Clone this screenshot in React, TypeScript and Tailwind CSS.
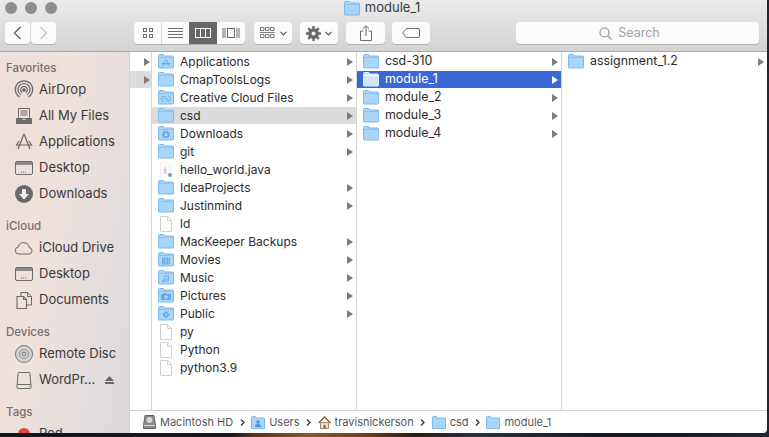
import React from "react";

type Glyph = "none" | "apps" | "cloud" | "down" | "movies" | "music" | "pictures" | "public";

function Folder({ glyph = "none", selected = false }: { glyph?: Glyph; selected?: boolean }) {
  const g = "#69a9e6";
  return (
    <svg width="16" height="15" viewBox="0 0 16 15" className="shrink-0">
      <path d="M.5 13.500V1.500q0-1 1-1h3.600q.7 0 1.100.6l.6.9h7.700q1 0 1 1v10.500q0 .5-.5.500H1q-.5 0-.5-.5Z" fill={selected ? "#cfe6fb" : "#a9d5f9"} stroke={selected ? "#e7f2fd" : "#7dbaee"} strokeWidth="1" />
      <path d="M1 3.500h14" stroke={selected ? "#fff" : "#8cc3f0"} strokeWidth="1" />
      {glyph === "apps" && <path d="M8 5 4.500 12M8 5l3.500 7M5 10h6M3.500 9.500h9" stroke={g} strokeWidth=".9" fill="none" />}
      {glyph === "cloud" && <path d="M5.500 11a2.200 2.200 0 0 1 0-4.400h2.200M10.500 6.600a2.200 2.200 0 0 1 0 4.400H8.300M5.800 8.800h4.400" stroke={g} strokeWidth=".9" fill="none" />}
      {glyph === "down" && (
        <>
          <circle cx="8" cy="8.500" r="3.700" fill={g} />
          <path d="M8 6.300v3.600M6.400 8.500 8 10.200l1.600-1.700" stroke="#d4eafc" strokeWidth="1" fill="none" />
        </>
      )}
      {glyph === "movies" && <path d="M4.500 6h7v6h-7ZM6.500 6v6M9.500 6v6M4.500 8h7M4.500 10h7" stroke={g} strokeWidth=".9" fill="none" />}
      {glyph === "music" && <path d="M6.800 11V6.300l3.700-.8v4.700M6.800 11a1.100 1 0 1 1-1-1h1M10.500 10.200a1.100 1 0 1 1-1-1h1" stroke={g} strokeWidth=".9" fill="none" />}
      {glyph === "pictures" && (
        <>
          <path d="M3 6h2l.8-1h2.400l.8 1H13v6H3Z" fill={g} />
          <circle cx="8" cy="9" r="1.800" fill="#a9d5f9" />
        </>
      )}
      {glyph === "public" && (
        <>
          <path d="m8 5 3.700 3.700L8 12.400 4.300 8.700Z" fill={g} />
          <circle cx="8" cy="8.700" r="1.100" fill="#a9d5f9" />
        </>
      )}
    </svg>
  );
}

function FileIcon() {
  return (
    <svg width="12" height="16" viewBox="0 0 12 16" className="shrink-0">
      <path d="M.5 1q0-.5.5-.5h6.500L11.500 4.500V15q0 .5-.5.500H1q-.5 0-.5-.5Z" fill="#fff" stroke="#cfcfcf" />
      <path d="M7.500.5v4h4" fill="none" stroke="#cfcfcf" />
    </svg>
  );
}

function JavaIcon() {
  return (
    <svg width="14" height="16" viewBox="0 0 14 16" className="shrink-0">
      <path d="M1.500.5h7l3 3V15h-10Z" fill="#fbfbfb" stroke="#efefef" />
      <path d="M6 5v5M5 8h2.500M4.800 11h3" stroke="#e0a5a5" strokeWidth="1" />
      <circle cx="11" cy="13" r="2" fill="#6b9fdc" />
    </svg>
  );
}

function Arrow({ white = false }: { white?: boolean }) {
  return (
    <svg width="6" height="8" viewBox="0 0 6 8" className="shrink-0">
      <path d="M0 0 6 4 0 8Z" fill={white ? "#ffffff" : "#7d7d7d"} />
    </svg>
  );
}

function SideIcon({ name }: { name: string }) {
  const s = "#6b6b6b";
  const common = { width: 20, height: 20, viewBox: "0 0 20 20", className: "shrink-0", fill: "none", stroke: s, strokeWidth: 1 };
  switch (name) {
    case "airdrop":
      return (
        <svg {...common}>
          <path d="M5.500 17a8.700 8.700 0 1 1 9 0M7 14.700a6 6 0 1 1 6 0M8.300 12.600a3.300 3.300 0 1 1 3.400 0" strokeWidth="1.200" />
          <circle cx="10" cy="10" r="1.300" fill={s} />
        </svg>
      );
    case "files":
      return (
        <svg {...common}>
          <path d="M4.500 2.500h11v10h-11ZM6.500 5h7M6.500 7h7M6.500 9h7" />
          <path d="M2.500 12.500h4.500q.5 2 3 2t3-2h4.500v5h-15Z" fill="#6f6f6f" />
        </svg>
      );
    case "apps":
      return (
        <svg {...common}>
          <path d="M10 2 4 17M10 2l6 15M2 13h16M5 9l-3 5M15 9l3 5" strokeWidth="1.200" />
        </svg>
      );
    case "desktop":
      return (
        <svg {...common}>
          <rect x="1.500" y="3.500" width="17" height="13" rx="1.500" />
          <path d="M2 4h16v3H2Z" fill="#8a8a8a" stroke="none" />
          <path d="M7 14h6" strokeDasharray="1 1" />
        </svg>
      );
    case "downloads":
      return (
        <svg width="20" height="20" viewBox="0 0 20 20" className="shrink-0">
          <circle cx="10" cy="10" r="9" fill="#6a6a6a" />
          <path d="M8 5h4v5h3l-5 5.500L5 10h3Z" fill="#f2f2f2" />
        </svg>
      );
    case "cloud":
      return (
        <svg {...common}>
          <path d="M5 16a3.500 3.500 0 0 1-.5-7A4.500 4.500 0 0 1 11 5a4.500 4.500 0 0 1 4 4.500 3.300 3.300 0 0 1 .5 6.500Z" strokeWidth="1" />
        </svg>
      );
    case "documents":
      return (
        <svg {...common}>
          <path d="M7 6.500V2.500h6.500l4 4V15H13" />
          <path d="M13.500 2.500v4h4" />
          <path d="M3 6.500h6.500l3 3v9H3Z" fill="none" strokeWidth="1.100" />
          <path d="M9.500 6.500v3h3" />
        </svg>
      );
    case "disc":
      return (
        <svg {...common}>
          <circle cx="10" cy="10" r="8.500" fill="#d2d2d2" stroke="#777" />
          <circle cx="10" cy="10" r="4.500" stroke="#8d8d8d" />
          <circle cx="10" cy="10" r="1.800" stroke="#777" />
        </svg>
      );
    default:
      return (
        <svg {...common}>
          <path d="M5 2.500h10q.8 0 .9.8L17 16v1.500q0 1-1 1H4q-1 0-1-1V16L4.100 3.300Q4.200 2.500 5 2.500Z" />
          <path d="M3 14.500h14" />
          <circle cx="15" cy="16.500" r=".6" fill={s} stroke="none" />
        </svg>
      );
  }
}

const sections = [
  { title: "Favorites", items: [["airdrop", "AirDrop"], ["files", "All My Files"], ["apps", "Applications"], ["desktop", "Desktop"], ["downloads", "Downloads"]] },
  { title: "iCloud", items: [["cloud", "iCloud Drive"], ["desktop", "Desktop"], ["documents", "Documents"]] },
  { title: "Devices", items: [["disc", "Remote Disc"], ["drive", "WordPr..."]] },
];

const col1: { name: string; kind: "folder" | "file" | "java"; glyph?: Glyph; arrow: boolean; active?: boolean }[] = [
  { name: "Applications", kind: "folder", glyph: "apps", arrow: true },
  { name: "CmapToolsLogs", kind: "folder", arrow: true },
  { name: "Creative Cloud Files", kind: "folder", glyph: "cloud", arrow: true },
  { name: "csd", kind: "folder", arrow: true, active: true },
  { name: "Downloads", kind: "folder", glyph: "down", arrow: true },
  { name: "git", kind: "folder", arrow: true },
  { name: "hello_world.java", kind: "java", arrow: false },
  { name: "IdeaProjects", kind: "folder", arrow: true },
  { name: "Justinmind", kind: "folder", arrow: true },
  { name: "ld", kind: "file", arrow: false },
  { name: "MacKeeper Backups", kind: "folder", arrow: true },
  { name: "Movies", kind: "folder", glyph: "movies", arrow: true },
  { name: "Music", kind: "folder", glyph: "music", arrow: true },
  { name: "Pictures", kind: "folder", glyph: "pictures", arrow: true },
  { name: "Public", kind: "folder", glyph: "public", arrow: true },
  { name: "py", kind: "file", arrow: false },
  { name: "Python", kind: "file", arrow: false },
  { name: "python3.9", kind: "file", arrow: false },
];

function Sidebar() {
  return (
    <div className="w-[130px] shrink-0 overflow-hidden bg-[linear-gradient(100deg,#ecdfdc_0%,#efe2dc_35%,#dcd9dc_100%)] pt-[7px] border-r border-[#d2cfcf]">
      {sections.map((sec) => (
        <div key={sec.title} className="mb-[10px]">
          <div className="h-[18px] pl-[6px] text-[11.500px] leading-[18px] font-medium text-[#776f6f]">{sec.title}</div>
          {sec.items.map(([icon, label]) => (
            <div key={label + icon} className="h-[26px] flex items-center pl-[14px] pr-[15px] gap-[5px] text-[13px] text-[#3b3838]">
              <SideIcon name={icon} />
              <span className="flex-1 whitespace-nowrap">{label}</span>
              {label === "WordPr..." && (
                <svg width="9" height="8" viewBox="0 0 9 8">
                  <path d="M4.500 0 9 5H0ZM0 6h9v2H0Z" fill="#666" />
                </svg>
              )}
            </div>
          ))}
        </div>
      ))}
      <div className="h-[18px] pl-[6px] text-[11.500px] leading-[18px] font-medium text-[#776f6f]">Tags</div>
      <div className="h-[26px] flex items-center pl-[18px] gap-[9px] text-[13px] text-[#3b3838]">
        <span className="w-[12px] h-[12px] rounded-full bg-[#e04a44]" />
        Red
      </div>
    </div>
  );
}

function ToolBtn({ children, className = "" }: { children: React.ReactNode; className?: string }) {
  return <div className={"h-[22px] flex items-center justify-center rounded-[4px] bg-[#fbfbfb] shadow-[0_1px_0_#b4b4b4] " + className}>{children}</div>;
}

function Crumb({ icon, label }: { icon: React.ReactNode; label: string }) {
  return (
    <span className="flex items-center gap-[4px] whitespace-nowrap">
      {icon}
      {label}
    </span>
  );
}

function Chev() {
  return (
    <svg width="5" height="7" viewBox="0 0 5 7" className="mx-[6.500px] shrink-0">
      <path d="m1 .5 3 3-3 3" fill="none" stroke="#333" strokeWidth="1.300" />
    </svg>
  );
}

export default function App() {
  return (
    <div className="w-[769px] h-[437px] overflow-hidden bg-[linear-gradient(90deg,#15151a_0%,#15151a_30%,#5a3218_33%,#8a5a2c_40%,#6e3c1c_48%,#2a1a14_54%,#2a3040_62%,#14161c_80%,#20242e_100%)] [font-family:Inter,'Liberation_Sans',sans-serif]">
      <div className="w-[767px] h-[433px] flex flex-col overflow-hidden rounded-br-[4px] bg-white">
        {/* title + toolbar */}
        <div className="h-[52px] shrink-0 bg-[linear-gradient(#ebebeb,#d3d3d3)] border-b border-[#a9a9a9]">
          <div className="relative h-[22px] flex items-center justify-center gap-[5px] pb-[6px] pr-[3px] text-[13px] text-[#3a3a3a]">
            <span className="absolute left-[5px] top-[2px] flex gap-[8px]">
              <i className="w-[12px] h-[12px] rounded-full bg-[#8f8f8f]" />
              <i className="w-[12px] h-[12px] rounded-full bg-[#8f8f8f]" />
              <i className="w-[12px] h-[12px] rounded-full bg-[#8f8f8f]" />
            </span>
            <Folder />
            module_1
          </div>
          <div className="flex items-center pl-[5px]">
            <div className="flex gap-px">
              <ToolBtn className="w-[25px]">
                <svg width="9" height="14" viewBox="0 0 9 14"><path d="M7.500 1 1.500 7l6 6" fill="none" stroke="#5f5f5f" strokeWidth="1.300" /></svg>
              </ToolBtn>
              <ToolBtn className="w-[25px]">
                <svg width="9" height="14" viewBox="0 0 9 14"><path d="m1.500 1 6 6-6 6" fill="none" stroke="#c2c2c2" strokeWidth="1.300" /></svg>
              </ToolBtn>
            </div>
            <div className="ml-[78px] flex h-[22px] w-[111px] overflow-hidden rounded-[4px] bg-[#fbfbfb] shadow-[0_1px_0_#b4b4b4]">
              <div className="w-[28px] flex items-center justify-center border-r border-[#dcdcdc]">
                <svg width="12" height="12" viewBox="0 0 12 12" fill="none" stroke="#6d6d6d"><rect x="1.500" y="1.500" width="3" height="3" /><rect x="7.500" y="1.500" width="3" height="3" /><rect x="1.500" y="7.500" width="3" height="3" /><rect x="7.500" y="7.500" width="3" height="3" /></svg>
              </div>
              <div className="w-[27px] flex items-center justify-center">
                <svg width="15" height="12" viewBox="0 0 15 12" stroke="#6d6d6d"><path d="M0 1.500h15M0 4.500h15M0 7.500h15M0 10.500h15" /></svg>
              </div>
              <div className="w-[28px] flex items-center justify-center bg-[#666666]">
                <svg width="16" height="10" viewBox="0 0 16 10" fill="none" stroke="#fff"><rect x=".5" y=".5" width="15" height="9" /><path d="M5.500 0v10M10.500 0v10" /></svg>
              </div>
              <div className="w-[28px] flex items-center justify-center">
                <svg width="18" height="12" viewBox="0 0 18 12" fill="none" stroke="#6d6d6d"><rect x="5.500" y="1.500" width="7" height="9" /><path d="M1 1v10M3 1v10M15 1v10M17 1v10" /></svg>
              </div>
            </div>
            <ToolBtn className="ml-[9px] w-[38px] gap-[5px]">
              <svg width="15" height="12" viewBox="0 0 15 12" fill="none" stroke="#6d6d6d"><path d="M.5 .5h3.500v3H.5ZM5.500 .5H9v3H5.500ZM10.500 .5H14v3h-3.500ZM.5 7.500h3.500v3H.5ZM5.500 7.500H9v3H5.500ZM10.500 7.500H14v3h-3.500ZM0 5.500h14.500" strokeWidth=".9" /></svg>
              <svg width="7" height="5" viewBox="0 0 7 5"><path d="m.5 .8 3 3 3-3" fill="none" stroke="#555" strokeWidth="1.200" /></svg>
            </ToolBtn>
            <ToolBtn className="ml-[8px] w-[38px] gap-[4px]">
              <svg width="15" height="15" viewBox="0 0 15 15">
                <circle cx="7.500" cy="7.500" r="5.300" fill="#686868" />
                <path d="M7.500 0v15M0 7.500h15M2.200 2.200l10.600 10.600M12.800 2.200 2.200 12.800" stroke="#686868" strokeWidth="2.400" />
                <circle cx="7.500" cy="7.500" r="2" fill="#fbfbfb" />
              </svg>
              <svg width="7" height="5" viewBox="0 0 7 5"><path d="m.5 .8 3 3 3-3" fill="none" stroke="#555" strokeWidth="1.200" /></svg>
            </ToolBtn>
            <ToolBtn className="ml-[8px] w-[39px]">
              <svg width="12" height="16" viewBox="0 0 12 16" fill="none" stroke="#6d6d6d"><path d="M3.500 6H.5v9.500h11V6h-3M6 11V.8M3 3.500 6 .8l3 2.700" /></svg>
            </ToolBtn>
            <ToolBtn className="ml-[7px] w-[38px]">
              <svg width="18" height="10" viewBox="0 0 18 10" fill="none" stroke="#6d6d6d"><path d="M4.500 .5H16q1.500 0 1.500 1.500v6q0 1.500-1.500 1.500H4.500L.7 5Z" /></svg>
            </ToolBtn>
            <ToolBtn className="ml-[86px] w-[243px] gap-[6px] pr-[16px] text-[12.500px] text-[#a3a3a3]">
              <svg width="13" height="13" viewBox="0 0 13 13" fill="none" stroke="#8c8c8c" strokeWidth="1.100"><circle cx="5.500" cy="5.500" r="4.500" /><path d="m9 9 3.500 3.500" /></svg>
              Search
            </ToolBtn>
          </div>
        </div>

        {/* body */}
        <div className="flex-1 min-h-0 flex">
          <Sidebar />
          <div className="flex-1 min-w-0 flex flex-col">
            <div className="flex-1 min-h-0 flex">
              {/* stub column */}
              <div className="w-[22px] shrink-0 flex flex-col gap-px pt-px border-r border-[#d6d6d6]">
                <div className="h-[17px] flex items-center pl-[14px]"><Arrow /></div>
                <div className="h-[17px] flex items-center pl-[14px] bg-[#dcdcdc]"><Arrow /></div>
              </div>
              {/* home column */}
              <div className="w-[205px] shrink-0 flex flex-col gap-px pt-px border-r border-[#d6d6d6] text-[#2b2b2b]">
                {col1.map((f) => (
                  <div key={f.name} className={"h-[17px] flex items-center pl-[6px] pr-[3px] text-[12px] " + (f.active ? "bg-[#dcdcdc]" : "")}>
                    <span className="w-[16px] shrink-0 flex justify-center">
                      {f.kind === "folder" && <Folder glyph={f.glyph} />}
                      {f.kind === "file" && <FileIcon />}
                      {f.kind === "java" && <JavaIcon />}
                    </span>
                    <span className="ml-[6px] flex-1 whitespace-nowrap">{f.name}</span>
                    {f.arrow && <Arrow />}
                  </div>
                ))}
              </div>
              {/* csd column */}
              <div className="w-[205px] shrink-0 flex flex-col gap-px pt-px border-r border-[#d6d6d6] text-[#2b2b2b]">
                {["csd-310", "module_1", "module_2", "module_3", "module_4"].map((n) => (
                  <div key={n} className={"h-[17px] flex items-center pl-[6px] pr-[3px] text-[12.400px] " + (n === "module_1" ? "bg-[#3b68d7] text-white" : "")}>
                    <Folder selected={n === "module_1"} />
                    <span className="ml-[6px] flex-1">{n}</span>
                    <Arrow white={n === "module_1"} />
                  </div>
                ))}
              </div>
              {/* module_1 column */}
              <div className="flex-1 min-w-0 pt-px text-[#2b2b2b]">
                <div className="h-[17px] flex items-center pl-[6px] pr-[3px] text-[12.400px]">
                  <Folder />
                  <span className="ml-[6px] flex-1">assignment_1.2</span>
                  <Arrow />
                </div>
              </div>
            </div>
            {/* path bar */}
            <div className="h-[23px] shrink-0 flex items-center pl-[13px] border-t border-[#d0d0d0] text-[11px] text-[#555]">
              <Crumb
                label="Macintosh HD"
                icon={
                  <svg width="13" height="14" viewBox="0 0 13 14">
                    <path d="M2 .5h9l1.500 10v3H.5v-3Z" fill="#8b8b8b" stroke="#666" />
                    <circle cx="6.500" cy="5" r="3" fill="#d5d5d5" />
                    <path d="M1 10.500h11" stroke="#ddd" />
                  </svg>
                }
              />
              <Chev />
              <Crumb
                label="Users"
                icon={
                  <svg width="14" height="13" viewBox="0 0 14 13">
                    <path d="M.5 12.500v-11q0-1 1-1h3l1 1.500h8v10.500Z" fill="#a9d5f9" stroke="#7dbaee" />
                    <circle cx="7" cy="6" r="1.800" fill="#4f94d8" />
                    <path d="M3.800 11q.4-3 3.200-3t3.200 3Z" fill="#4f94d8" />
                  </svg>
                }
              />
              <Chev />
              <Crumb
                label="travisnickerson"
                icon={
                  <svg width="13" height="13" viewBox="0 0 13 13">
                    <path d="M2.500 6.500h8V12.500h-8Z" fill="#e9dfc9" stroke="#9a8a70" />
                    <path d="M.5 7 6.500 1l6 6" fill="none" stroke="#8e5a3c" strokeWidth="1.400" />
                    <path d="M5.500 9h2v3.500h-2Z" fill="#8e5a3c" />
                  </svg>
                }
              />
              <Chev />
              <Crumb
                label="csd"
                icon={
                  <svg width="14" height="13" viewBox="0 0 14 13">
                    <path d="M.5 12.500v-11q0-1 1-1h3l1 1.500h8v10.500Z" fill="#a9d5f9" stroke="#7dbaee" />
                  </svg>
                }
              />
              <Chev />
              <Crumb
                label="module_1"
                icon={
                  <svg width="14" height="13" viewBox="0 0 14 13">
                    <path d="M.5 12.500v-11q0-1 1-1h3l1 1.500h8v10.500Z" fill="#a9d5f9" stroke="#7dbaee" />
                  </svg>
                }
              />
            </div>
          </div>
        </div>
      </div>
    </div>
  );
}
